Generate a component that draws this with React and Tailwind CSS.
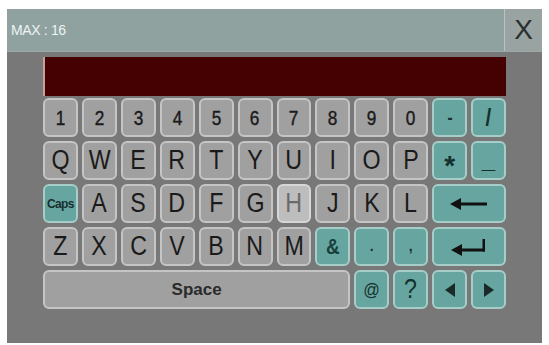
import React from "react"

const gray = "bg-[#a0a0a0] border-[#c5c5c5] text-[#1a1a1a]"
const teal = "bg-[#67a6a0] border-[#a6cdc8] text-[#16302e]"

function Key({ children, kind = "gray", span = "", className = "" }) {
  const look = kind === "teal" ? teal : kind === "light" ? "bg-[#bdbdbd] border-[#d6d6d6] text-[#6a6a6a]" : gray
  return (
    <div className={`flex items-center justify-center rounded-[6px] border-2 ${look} ${span} ${className}`}>
      {children}
    </div>
  )
}

// narrow glyphs like the reference font
function N({ children }) {
  return <span className="inline-block scale-x-[0.86] leading-none">{children}</span>
}

function LeftArrow() {
  return (
    <svg width="38" height="12" viewBox="0 0 38 12">
      <polygon points="0,6 11,0 11,12" fill="#111" />
      <rect x="10" y="4.5" width="27" height="3" fill="#111" />
    </svg>
  )
}

function EnterArrow() {
  return (
    <svg width="36" height="18" viewBox="0 0 36 18">
      <polygon points="0,12 11,6 11,18" fill="#111" />
      <rect x="10" y="10.5" width="24" height="3" fill="#111" />
      <rect x="31.5" y="1" width="2.5" height="12.5" fill="#111" />
    </svg>
  )
}

function Tri({ dir }) {
  return (
    <svg width="10" height="14" viewBox="0 0 10 14">
      {dir === "left" ? <polygon points="0,7 10,0 10,14" fill="#1b2a29" /> : <polygon points="10,7 0,0 0,14" fill="#1b2a29" />}
    </svg>
  )
}

export default function App() {
  const nums = ["1", "2", "3", "4", "5", "6", "7", "8", "9", "0"]
  const top = ["Q", "W", "E", "R", "T", "Y", "U", "I", "O", "P"]
  const mid = ["A", "S", "D", "F", "G"]
  const bottom = ["Z", "X", "C", "V", "B", "N", "M"]

  return (
    <div className="w-[549px] h-[345px] bg-white pt-[9px] pl-[7px]" style={{ fontFamily: '"Liberation Sans", Arial, sans-serif' }}>
      <div className="w-[535px] h-[334px] flex flex-col bg-[#787878]">
        {/* header */}
        <div className="h-[43px] flex border-b border-[#9aa8a6]">
          <div className="flex-1 bg-[#8fa2a0] flex items-center pl-[4px] text-[14px] text-[#eef3f3] tracking-tight">
            MAX : 16
          </div>
          <div className="w-[38px] bg-[#98a3a2] border-l border-[#b5c4c2] flex items-center justify-center text-[28px] text-[#2a2f2f]">
            X
          </div>
        </div>

        {/* body */}
        <div className="flex flex-col px-[36px] pt-[5px]">
          <div className="h-[39px] bg-[#450101] border-l-2 border-[#c9a0a0] mb-[2px]" />

          <div className="grid grid-cols-12 auto-rows-[39px] gap-[4px]">
            {nums.map((n) => (
              <Key key={n} className="text-[20px] [-webkit-text-stroke:0.4px_#1a1a1a]"><N>{n}</N></Key>
            ))}
            <Key kind="teal" className="text-[18px] font-bold"><N>-</N></Key>
            <Key kind="teal" className="text-[24px] font-bold"><N>/</N></Key>

            {top.map((n) => (
              <Key key={n} className="text-[27px]"><N>{n}</N></Key>
            ))}
            <Key kind="teal" className="text-[28px] font-bold pt-[10px]">*</Key>
            <Key kind="teal" className="text-[24px] font-bold pb-[2px]">_</Key>

            <Key kind="teal" className="text-[12px] font-bold text-[#1d4f4a] tracking-tighter">Caps</Key>
            {mid.map((n) => (
              <Key key={n} className="text-[27px]"><N>{n}</N></Key>
            ))}
            <Key kind="light" className="text-[27px]"><N>H</N></Key>
            <Key className="text-[27px]"><N>J</N></Key>
            <Key className="text-[27px]"><N>K</N></Key>
            <Key className="text-[27px]"><N>L</N></Key>
            <Key kind="teal" span="col-span-2"><LeftArrow /></Key>

            {bottom.map((n) => (
              <Key key={n} className="text-[27px]"><N>{n}</N></Key>
            ))}
            <Key kind="teal" className="text-[22px] font-bold text-[#17403c]"><N>&amp;</N></Key>
            <Key kind="teal" className="text-[14px] font-bold">.</Key>
            <Key kind="teal" className="text-[14px] font-bold">,</Key>
            <Key kind="teal" span="col-span-2"><EnterArrow /></Key>

            <Key span="col-span-8" className="text-[17px] font-bold text-[#2a2a2a] bg-[#9c9c9c]">Space</Key>
            <Key kind="teal" className="text-[19px] text-[#1d3f3c]"><N>@</N></Key>
            <Key kind="teal" className="text-[27px] text-[#0f1f2a]"><N>?</N></Key>
            <Key kind="teal"><Tri dir="left" /></Key>
            <Key kind="teal"><Tri dir="right" /></Key>
          </div>
        </div>
      </div>
    </div>
  )
}
